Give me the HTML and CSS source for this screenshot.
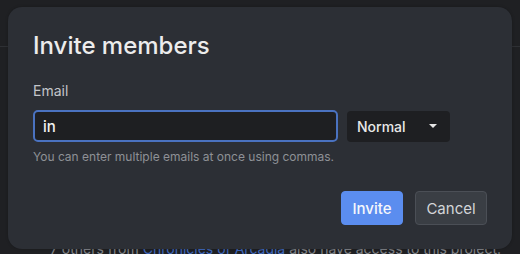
FILE: index.html
```html
<!DOCTYPE html>
<html>
<head>
<meta charset="utf-8">
<link rel="stylesheet" href="styles.css">
</head>
<body>
<div class="page">
  <div class="page-header"></div>
  <p class="access-note">7 others from <a class="link">Chronicles of Arcadia</a> also have access to this project.</p>
</div>
<div class="modal">
  <h2 class="title">Invite members</h2>
  <label class="label">Email</label>
  <div class="row">
    <div class="input">in</div>
    <div class="select">
      <span>Normal</span>
      <svg class="caret" width="8" height="4" viewBox="0 0 8 4"><path d="M0 0h8L4 4z" fill="#e6e6e6"/></svg>
    </div>
  </div>
  <p class="hint">You can enter multiple emails at once using commas.</p>
  <div class="actions">
    <button class="btn btn-primary">Invite</button>
    <button class="btn btn-secondary">Cancel</button>
  </div>
</div>
</body>
</html>
```
FILE: styles.css
```css
* { box-sizing: border-box; }
html, body { margin: 0; padding: 0; }
body {
  width: 520px;
  height: 254px;
  overflow: hidden;
  background: #1f2023;
  font-family: Inter, Roboto, "Liberation Sans", sans-serif;
  position: relative;
}
.page-header {
  height: 47px;
  border-bottom: 1px solid #2e3034;
}
.access-note {
  margin: 193px 0 0 50px;
  font-size: 14px;
  line-height: 18px;
  color: #7f8287;
  white-space: nowrap;
}
.link { color: #3f68bd; }
.modal {
  position: absolute;
  left: 8px;
  top: 7px;
  width: 504px;
  height: 242px;
  background: #2c2f35;
  border-radius: 14px;
  padding: 25px 25px 0 25px;
  box-shadow: 0 0 3px rgba(0,0,0,0.25);
}
.title {
  margin: 0;
  font-size: 24px;
  font-weight: 500;
  color: #ececec;
  line-height: 28px;
}
.label {
  display: block;
  margin-top: 23px;
  font-size: 14px;
  color: #c3c5c9;
  line-height: 16px;
}
.row {
  display: flex;
  align-items: center;
  gap: 9px;
  margin-top: 11px;
}
.input {
  width: 305px;
  height: 32px;
  border: 2px solid #4a72c0;
  border-radius: 5px;
  background: #1e1f22;
  color: #f2f2f2;
  font-size: 15px;
  font-weight: 500;
  padding: 0 8px;
  display: flex;
  align-items: center;
}
.select {
  width: 103px;
  height: 31px;
  border-radius: 4px;
  background: #1e1f22;
  color: #e8e8e8;
  font-size: 14px;
  font-weight: 500;
  padding: 0 10px;
  display: flex;
  align-items: center;
  justify-content: space-between;
}
.caret { margin-right: 3px; }
.hint {
  margin: 8px 0 0 0;
  font-size: 12px;
  color: #8e9196;
  line-height: 14px;
}
.actions {
  display: flex;
  justify-content: flex-end;
  gap: 12px;
  margin-top: 27px;
}
.btn {
  height: 34px;
  border-radius: 4px;
  font-family: inherit;
  font-size: 15px;
  padding: 0;
  cursor: pointer;
}
.btn-primary {
  background: #5b8def;
  color: #f5f7fb;
  border: 1px solid #5b8def;
  width: 62px;
  font-weight: 500;
}
.btn-secondary {
  background: #3a3e44;
  color: #d3d5d8;
  border: 1px solid #4b4f56;
  width: 72px;
}
```
